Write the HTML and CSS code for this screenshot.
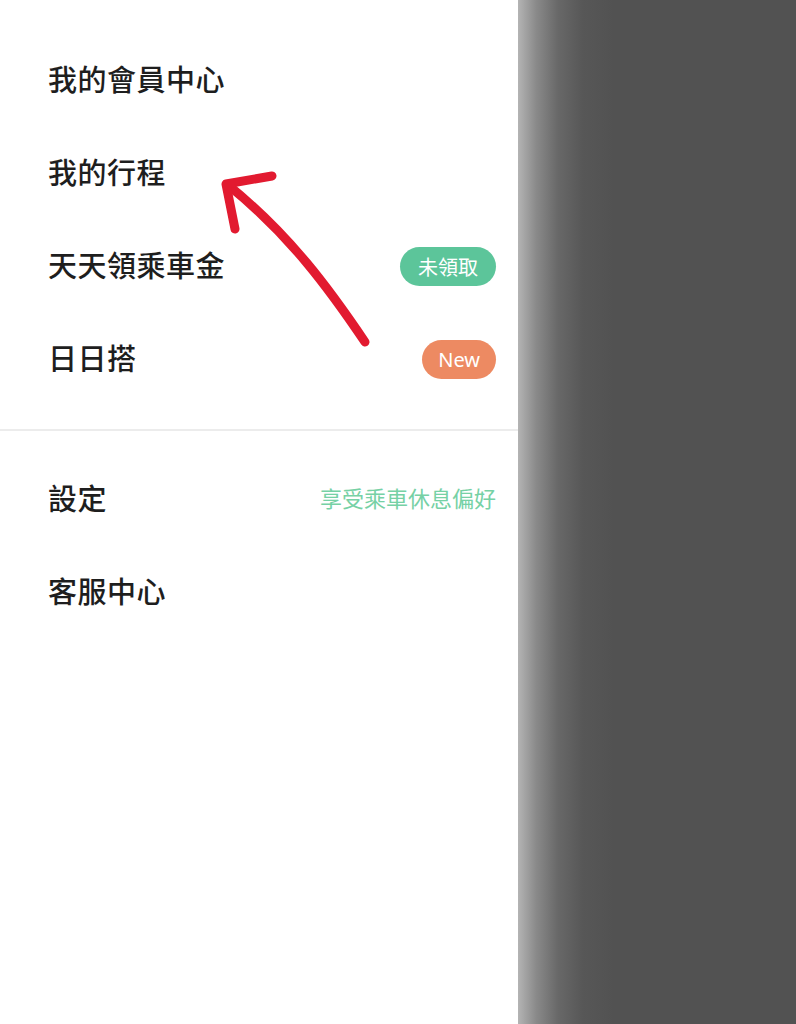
FILE: index.html
```html
<!DOCTYPE html>
<html lang="zh-Hant">
  <head>
    <meta charset="UTF-8" />
    <meta name="viewport" content="width=device-width, initial-scale=1.0" />
    <title>選單</title>
    <link rel="stylesheet" href="styles.css">
  </head>
  <body>
    <div class="drawer">
      <ul class="menu">
        <li class="menu-item">我的會員中心</li>
        <li class="menu-item">我的行程</li>
        <li class="menu-item">
          天天領乘車金
          <span class="badge badge-green">未領取</span>
        </li>
        <li class="menu-item">
          日日搭
          <span class="badge badge-orange">New</span>
        </li>
      </ul>
      <hr class="divider" />
      <ul class="menu menu-lower">
        <li class="menu-item">
          設定
          <span class="hint">享受乘車休息偏好</span>
        </li>
        <li class="menu-item">客服中心</li>
      </ul>
      <!-- hand drawn arrow over the menu -->
      <svg class="arrow" width="518" height="420" viewBox="0 0 518 420">
        <path d="M365 342 C 330 290, 290 235, 228 185" />
        <path d="M272 176 L 226 184 L 235 229" />
      </svg>
    </div>
    <div class="overlay"></div>
  </body>
</html>
```

FILE: styles.css
```css
body {
  margin: 0;
  display: flex;
  min-height: 100vh;
  font-family: "Noto Sans CJK TC", "Noto Sans", sans-serif;
  background-color: #525252;
}
.drawer {
  position: relative;
  width: 518px;
  flex-shrink: 0;
  background: #ffffff;
  min-height: 1024px;
}
.menu {
  list-style: none;
  margin: 0;
  padding: 31px 22px 0 48px;
}
.menu-lower {
  padding-top: 19px;
}
.menu-item {
  height: 93px;
  display: flex;
  align-items: center;
  justify-content: space-between;
  font-size: 29px;
  font-weight: 500;
  color: #1e1e1e;
  letter-spacing: 0.5px;
}
.badge {
  height: 39px;
  margin-top: 6px;
  display: flex;
  align-items: center;
  border-radius: 20px;
  padding: 0 18px;
  font-size: 20px;
  font-weight: 400;
  color: #ffffff;
  letter-spacing: 0;
}
.badge-green {
  background-color: #5cc59a;
}
.badge-orange {
  background-color: #ed8a62;
  font-family: "Noto Sans", sans-serif;
  padding: 0 16px;
}
.hint {
  font-size: 22px;
  font-weight: 400;
  color: #76d1a5;
  letter-spacing: 0;
}
.divider {
  border: none;
  border-top: 2px solid #ececec;
  margin: 26px 0 0;
}
.arrow {
  position: absolute;
  left: 0;
  top: 0;
  fill: none;
  stroke: #e21a30;
  stroke-width: 9;
  stroke-linecap: round;
  stroke-linejoin: round;
}
.overlay {
  flex: 1;
  background: linear-gradient(to right, #b4b4b4 0, #8a8a8a 18px, #686868 40px, #575757 65px, #525252 95px);
}
```
